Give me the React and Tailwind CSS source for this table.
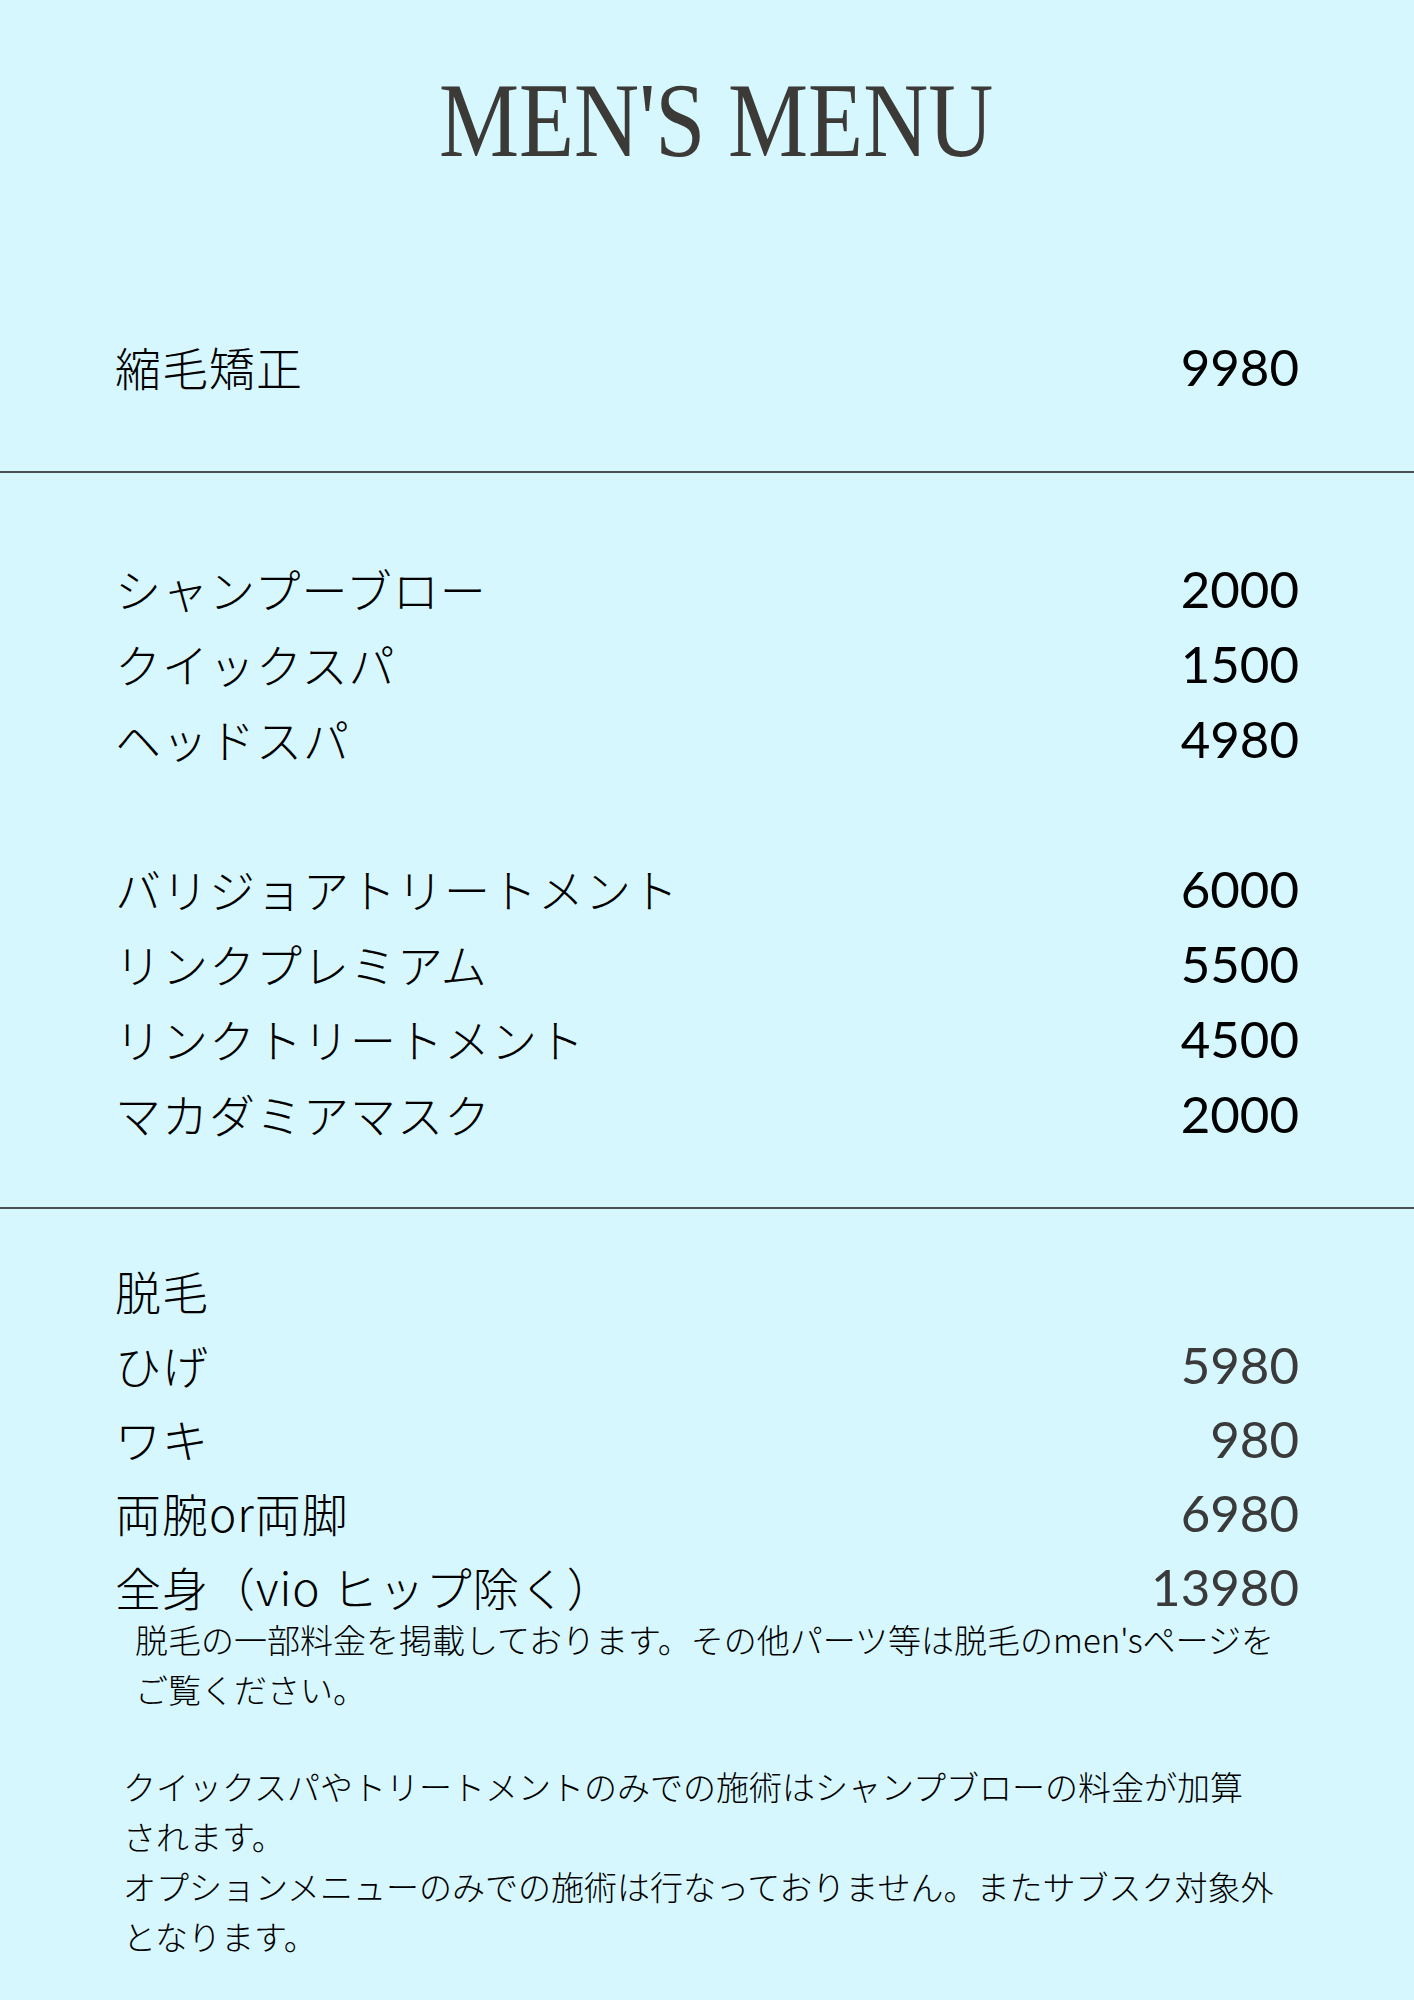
import React from 'react';

const jp = { fontFamily: '"Noto Sans CJK JP", "Noto Sans", sans-serif' };

const Row = ({ label, price, tone = 'text-black', h = 'h-[75px]' }) => (
  <div className={`flex items-center justify-between ${h}`}>
    <span className="text-[46px] font-light text-black tracking-[1px]" style={jp}>{label}</span>
    {price && (
      <span className={`font-['Lato',sans-serif] text-[51px] leading-none ${tone}`}>{price}</span>
    )}
  </div>
);

export default function App() {
  return (
    <div className="w-full min-h-[2000px] bg-[#d7f7fe] pb-10">
      {/* Title */}
      <div className="flex justify-center pt-[68px] pl-[18px]">
        <h1 className="inline-block origin-center scale-x-[0.85] font-['Liberation_Serif',serif] text-[106px] leading-none text-[#3b3a37]">
          MEN'S MENU
        </h1>
      </div>

      {/* Straightening */}
      <div className="px-[115px] mt-[155px]">
        <Row label="縮毛矯正" price="9980" />
      </div>
      <div className="mt-[67px] h-[2px] bg-[#4b5152]" />

      {/* Spa & treatment */}
      <div className="px-[115px] mt-[78px]">
        <Row label="シャンプーブロー" price="2000" />
        <Row label="クイックスパ" price="1500" />
        <Row label="ヘッドスパ" price="4980" />
        <div className="h-[75px]" />
        <Row label="バリジョアトリートメント" price="6000" />
        <Row label="リンクプレミアム" price="5500" />
        <Row label="リンクトリートメント" price="4500" />
        <Row label="マカダミアマスク" price="2000" />
      </div>
      <div className="mt-[56px] h-[2px] bg-[#4b5152]" />

      {/* Hair removal */}
      <div className="px-[115px] mt-[44px]">
        <Row label="脱毛" h="h-[74px]" />
        <Row label="ひげ" price="5980" tone="text-[#3a3a3a]" h="h-[74px]" />
        <Row label="ワキ" price="980" tone="text-[#3a3a3a]" h="h-[74px]" />
        <Row label="両腕or両脚" price="6980" tone="text-[#3a3a3a]" h="h-[74px]" />
        <Row label="全身（vio ヒップ除く）" price="13980" tone="text-[#3a3a3a]" h="h-[74px]" />
      </div>

      {/* Notes */}
      <div className="px-[123px] text-[33px] leading-[50px] font-light text-black" style={jp}>
        <p className="-mt-[9px] pl-[12px]">
          脱毛の一部料金を掲載しております。その他パーツ等は脱毛のmen'sページを
          <br />
          ご覧ください。
        </p>
        <p className="mt-[47px]">
          クイックスパやトリートメントのみでの施術はシャンプブローの料金が加算
          <br />
          されます。
          <br />
          オプションメニューのみでの施術は行なっておりません。またサブスク対象外
          <br />
          となります。
        </p>
      </div>
    </div>
  );
}
